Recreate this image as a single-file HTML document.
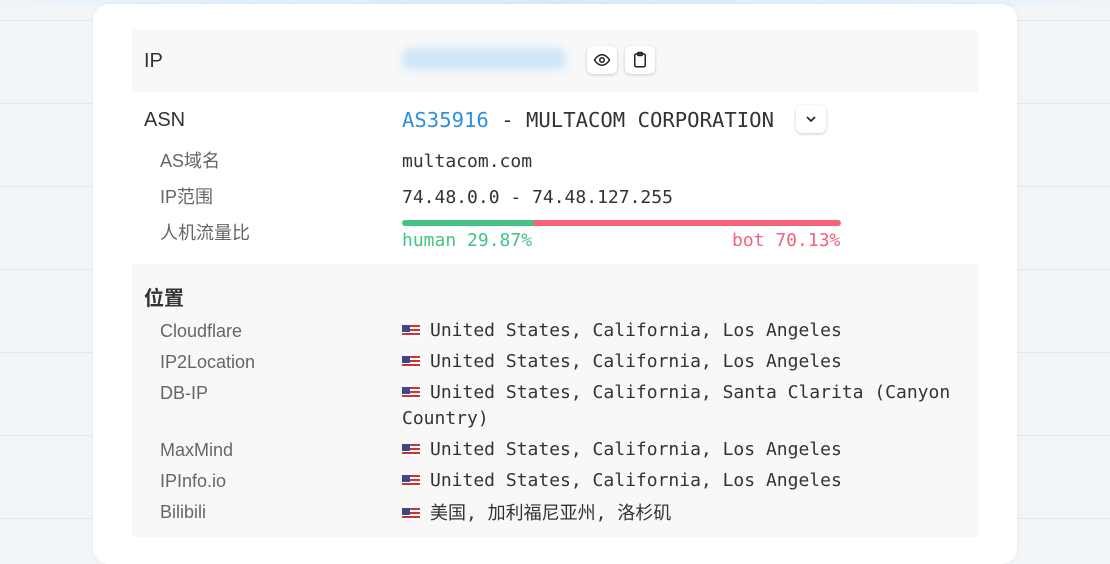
<!DOCTYPE html>
<html><head><meta charset="utf-8"><style>
body{margin:0;width:1110px;height:547px;overflow:hidden;background:#f3f6f9;font-family:"Liberation Sans","Noto Sans CJK SC",sans-serif;position:relative}
.grid{position:absolute;inset:0;background-image:linear-gradient(#e3e8ee 1px,transparent 1px);background-size:100% 83px;background-position:0 20px}
.top{position:absolute;left:0;right:0;top:0;height:6px;background:linear-gradient(90deg,#eef4fa,#d8ecfb,#eef4fa)}
.card{position:absolute;left:93px;top:4px;width:924px;height:560px;background:#fff;border-radius:16px;box-shadow:0 0 6px rgba(0,0,0,.05)}
.a{position:absolute;white-space:nowrap}
.lab{font-size:20px;color:#333}
.sub{font-size:18px;color:#666}
.m{font-family:"DejaVu Sans Mono","Liberation Mono","Noto Sans CJK SC",monospace;font-size:18px;color:#333}
.btn{position:absolute;width:30px;height:28px;border-radius:6px;background:#fff;box-shadow:0 1px 3px rgba(0,0,0,.2);display:flex;align-items:center;justify-content:center}
.flag{display:inline-block;width:18px;height:12px;margin-right:10px;vertical-align:-1px;background:repeating-linear-gradient(#c33 0 2px,#fff 2px 4px);position:relative}
.flag:before{content:"";position:absolute;left:0;top:0;width:8px;height:7px;background:#3c4a8a}
</style></head><body>
<div class="grid"></div><div class="top"></div>
<div class="card"></div>
<div class="a" style="left:132px;top:30px;width:846px;height:62px;background:#f8f8f8"></div>
<div class="a" style="left:132px;top:264px;width:846px;height:273px;background:#f8f8f8"></div>
<div class="a lab" style="left:144px;top:50px">IP</div>
<div class="a" style="left:402px;top:48px;width:164px;height:22px;background:#cfe6f8;filter:blur(4px);border-radius:8px"></div>
<div class="btn" style="left:587px;top:46px"><svg width="18" height="18" viewBox="0 0 24 24" fill="none" stroke="#222" stroke-width="2"><path d="M2 12s4-7 10-7 10 7 10 7-4 7-10 7S2 12 2 12z"/><circle cx="12" cy="12" r="3"/></svg></div>
<div class="btn" style="left:625px;top:46px"><svg width="18" height="18" viewBox="0 0 24 24" fill="none" stroke="#222" stroke-width="2"><rect x="5" y="4" width="14" height="17" rx="2"/><rect x="9" y="2" width="6" height="4" rx="1"/></svg></div>
<div class="a lab" style="left:144px;top:109px">ASN</div>
<div class="a m" style="left:402px;top:108px;font-size:20.6px"><span style="color:#2f8fdc">AS35916</span> - MULTACOM CORPORATION</div>
<div class="btn" style="left:796px;top:105px"><svg width="16" height="16" viewBox="0 0 24 24" fill="none" stroke="#222" stroke-width="2.5"><path d="M6 9l6 6 6-6"/></svg></div>
<div class="a sub" style="left:160px;top:147px">AS域名</div>
<div class="a m" style="left:402px;top:151px">multacom.com</div>
<div class="a sub" style="left:160px;top:183px">IP范围</div>
<div class="a m" style="left:402px;top:187px">74.48.0.0 - 74.48.127.255</div>
<div class="a sub" style="left:160px;top:219px">人机流量比</div>
<div class="a" style="left:402px;top:220px;width:131px;height:6px;background:#45c285;border-radius:3px 0 0 3px"></div>
<div class="a" style="left:533px;top:220px;width:308px;height:6px;background:#f5637a;border-radius:0 3px 3px 0"></div>
<div class="a m" style="left:402px;top:230px;color:#45c285">human 29.87%</div>
<div class="a m" style="left:732px;top:230px;color:#f5637a">bot 70.13%</div>
<div class="a lab" style="left:144px;top:282px;font-weight:bold">位置</div>
<div class="a sub" style="left:160px;top:321px">Cloudflare</div>
<div class="a m" style="left:402px;top:320px"><span class="flag"></span>United States, California, Los Angeles</div>
<div class="a sub" style="left:160px;top:352px">IP2Location</div>
<div class="a m" style="left:402px;top:351px"><span class="flag"></span>United States, California, Los Angeles</div>
<div class="a sub" style="left:160px;top:383px">DB-IP</div>
<div class="a m" style="left:402px;top:382px"><span class="flag"></span>United States, California, Santa Clarita (Canyon</div>
<div class="a m" style="left:402px;top:408px">Country)</div>
<div class="a sub" style="left:160px;top:440px">MaxMind</div>
<div class="a m" style="left:402px;top:439px"><span class="flag"></span>United States, California, Los Angeles</div>
<div class="a sub" style="left:160px;top:471px">IPInfo.io</div>
<div class="a m" style="left:402px;top:470px"><span class="flag"></span>United States, California, Los Angeles</div>
<div class="a sub" style="left:160px;top:502px">Bilibili</div>
<div class="a m" style="left:402px;top:499px"><span class="flag"></span>美国, 加利福尼亚州, 洛杉矶</div>
</body></html>
